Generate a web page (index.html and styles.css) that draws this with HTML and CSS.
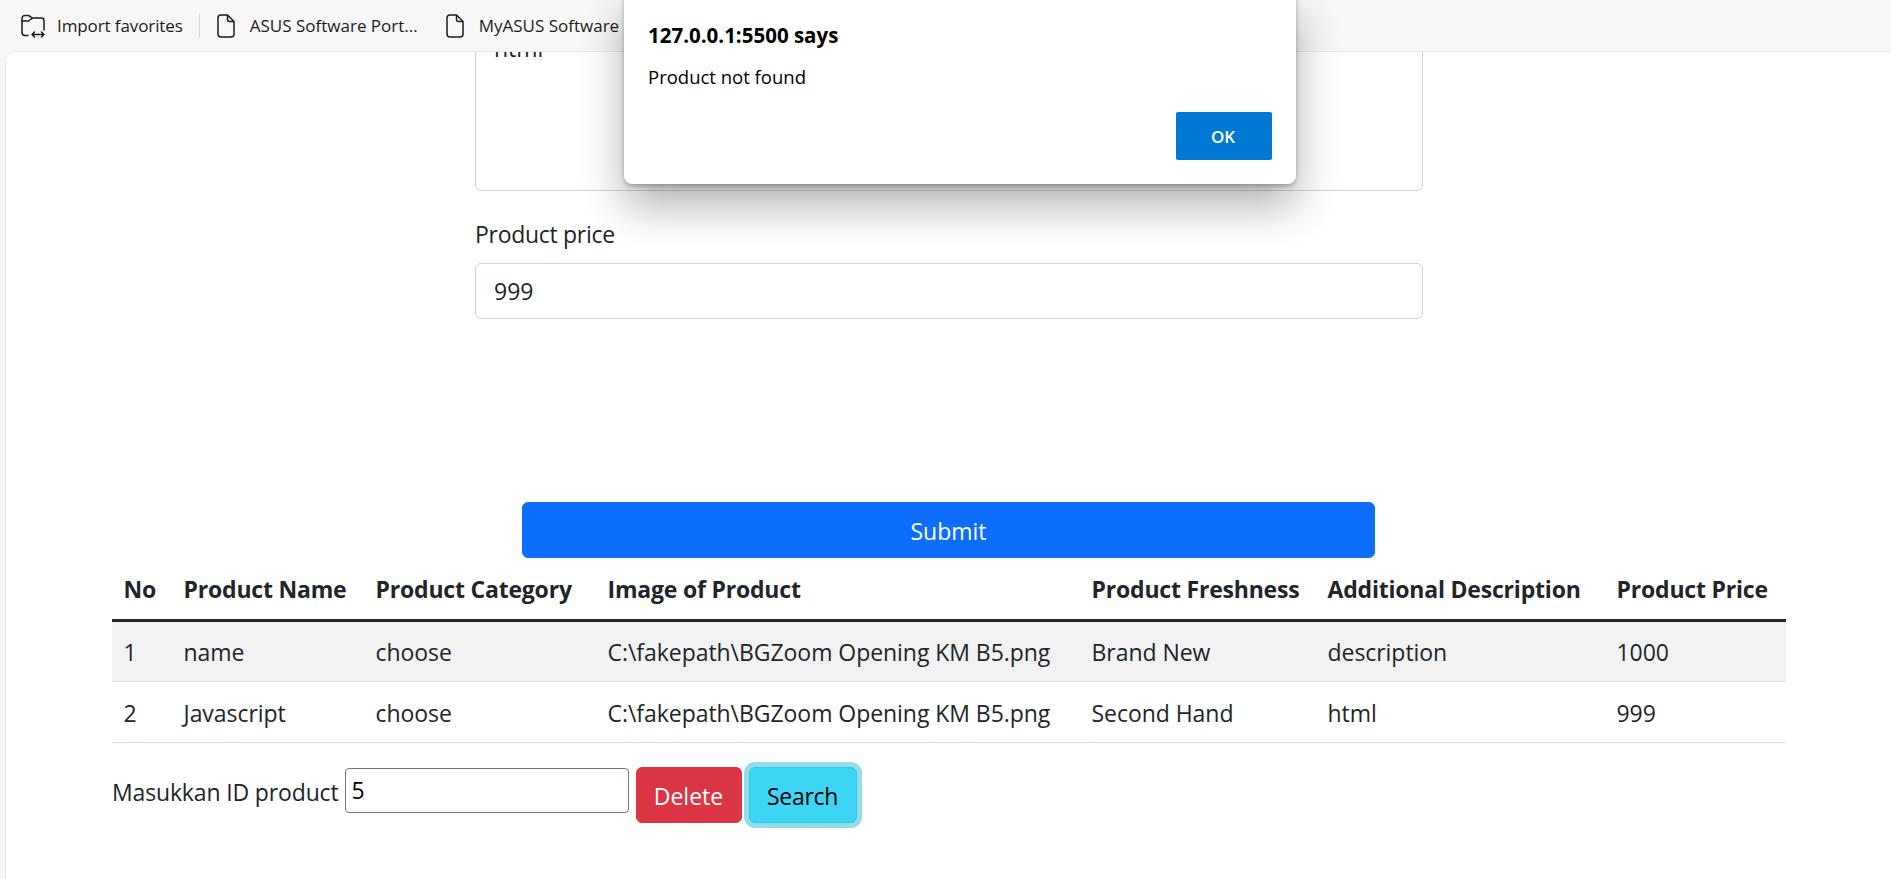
FILE: index.html
```html
<!DOCTYPE html>
<html lang="en">
<head>
<meta charset="utf-8">
<title>Products</title>
<link rel="stylesheet" href="styles.css">
</head>
<body>
<nav class="favbar">
  <a class="fav fav-import">
    <svg class="ico ico-folder" viewBox="0 0 26 24" fill="none" stroke="#1c1c1c" stroke-width="1.5" stroke-linecap="round" stroke-linejoin="round"><path d="M2 18V4.500a3 3 0 0 1 3-3h3c.8 0 1.400.3 2 .8l2 1.700h9.500a2.500 2.500 0 0 1 2.500 2.500V16"/><path d="M2 7h6.500l3.500-2.500"/><path d="M2 18.500a3 3 0 0 0 3 3h3"/><path d="M12 20.500h12M14.500 18L12 20.500 14.500 23M21.500 18L24 20.500 21.500 23"/></svg>
    <span>Import favorites</span>
  </a>
  <span class="fav-sep"></span>
  <a class="fav">
    <svg class="ico ico-file" viewBox="0 0 20 26" fill="none" stroke="#1c1c1c" stroke-width="1.500" stroke-linejoin="round"><path d="M5 2h6.500L18 8.500V21a3 3 0 0 1-3 3H5a3 3 0 0 1-3-3V5a3 3 0 0 1 3-3Z"/><path d="M11.500 2v4.500a2 2 0 0 0 2 2H18"/></svg>
    <span>ASUS Software Port...</span>
  </a>
  <a class="fav">
    <svg class="ico ico-file" viewBox="0 0 20 26" fill="none" stroke="#1c1c1c" stroke-width="1.500" stroke-linejoin="round"><path d="M5 2h6.500L18 8.500V21a3 3 0 0 1-3 3H5a3 3 0 0 1-3-3V5a3 3 0 0 1 3-3Z"/><path d="M11.500 2v4.500a2 2 0 0 0 2 2H18"/></svg>
    <span>MyASUS Software</span>
  </a>
</nav>

<main class="page">
  <form class="product-form">
    <textarea class="control area" readonly>html</textarea>
    <label class="field-label" for="price">Product price</label>
    <input class="control" id="price" type="text" value="999" readonly>
    <button class="btn btn-primary submit" type="button">Submit</button>
  </form>

  <section class="listing">
    <table class="products">
      <thead>
        <tr>
          <th>No</th><th>Product Name</th><th>Product Category</th><th>Image of Product</th><th>Product Freshness</th><th>Additional Description</th><th>Product Price</th>
        </tr>
      </thead>
      <tbody>
        <tr class="striped">
          <td>1</td><td>name</td><td>choose</td><td>C:\fakepath\BGZoom Opening KM B5.png</td><td>Brand New</td><td>description</td><td>1000</td>
        </tr>
        <tr>
          <td>2</td><td>Javascript</td><td>choose</td><td>C:\fakepath\BGZoom Opening KM B5.png</td><td>Second Hand</td><td>html</td><td>999</td>
        </tr>
      </tbody>
    </table>
    <div class="actions">
      <label class="id-label" for="pid">Masukkan ID product</label>
      <input class="id-input" id="pid" type="text" value="5" readonly>
      <button class="btn btn-danger" type="button">Delete</button>
      <button class="btn btn-info" type="button">Search</button>
    </div>
  </section>
</main>

<div class="dialog" role="alertdialog">
  <div class="dialog-title">127.0.0.1:5500 says</div>
  <div class="dialog-msg">Product not found</div>
  <div class="dialog-foot"><button class="dialog-ok" type="button">OK</button></div>
</div>
</body>
</html>
```

FILE: styles.css
```css
* { box-sizing: border-box; }
html, body { margin: 0; height: 100%; }
body {
  background: #f7f7f7;
  color: #212529;
  font-family: "Open Sans", "Noto Sans", sans-serif;
  overflow: hidden;
  display: flex;
  flex-direction: column;
}

.favbar {
  height: 51px;
  flex: none;
  display: flex;
  align-items: center;
  padding-left: 20px;
  font-size: 17px;
  color: #1c1c1c;
}
.fav { display: flex; align-items: center; gap: 14px; margin-right: 27px; white-space: nowrap; }
.fav-import { gap: 11px; margin-right: 16px; letter-spacing: -0.1px; }
.fav-sep { width: 1px; height: 24px; background: #d6d6d6; margin-right: 16px; }
.ico-folder { width: 26px; height: 24px; }
.ico-file { width: 20px; height: 26px; }

.page {
  flex: 1;
  margin-left: 5px;
  background: #fff;
  border-top-left-radius: 10px;
  border-top: 1px solid #e8e8e8;
  border-left: 1px solid #ececec;
  overflow: hidden;
  font-size: 23px;
}

.product-form {
  width: 948px;
  margin: -34px 0 0 469px;
  display: flex;
  flex-direction: column;
}
.control {
  display: block;
  width: 100%;
  height: 56px;
  padding: 8px 18px;
  font: inherit;
  color: #212529;
  background: #fff;
  border: 1px solid #ced4da;
  border-radius: 6px;
  outline: none;
}
.area { height: 173px; padding-top: 13px; resize: none; overflow: hidden; }
.field-label { margin: 27px 0 13px; line-height: 32px; letter-spacing: -0.3px; }

.btn {
  height: 56px;
  border: 1px solid transparent;
  border-radius: 6px;
  font: inherit;
  padding: 2px 0 0;
}
.btn-primary { background: #0d6efd; border-color: #0d6efd; color: #fff; }
.submit { width: 853px; margin: 183px 0 0 47px; }
.btn-danger { width: 106px; background: #dc3545; border-color: #dc3545; color: #fff; }
.btn-info {
  width: 108px;
  background: #3dd5f3;
  border-color: #25cff2;
  color: #000;
  letter-spacing: -0.3px;
  box-shadow: 0 0 0 5px #94dde9;
}

.listing { margin-left: 106px; width: 1674px; }
.products {
  width: 100%;
  table-layout: fixed;
  border-collapse: collapse;
}
.products th, .products td { padding: 2px 0 0 11.500px; text-align: left; }
.products th { height: 62px; font-weight: 700; letter-spacing: -0.2px; border-bottom: 3px solid #212529; }
.products td { height: 61px; letter-spacing: -0.05px; border-bottom: 1px solid #dee2e6; }
.striped td { background: #f2f2f2; }
.products th:nth-child(1) { width: 60px; }
.products th:nth-child(2) { width: 192px; }
.products th:nth-child(3) { width: 232px; }
.products th:nth-child(4) { width: 484px; }
.products th:nth-child(5) { width: 236px; }
.products th:nth-child(6) { width: 289px; }

.actions {
  display: flex;
  align-items: flex-start;
  margin-top: 24px;
  gap: 7px;
}
.id-label { line-height: 50px; margin-right: -1px; letter-spacing: -0.15px; }
.id-input {
  width: 284px;
  height: 45px;
  margin-top: 1px;
  padding: 0 6px;
  font: inherit;
  color: #000;
  background: #fff;
  border: 1px solid #767676;
  border-radius: 4px;
  outline: none;
}

.dialog {
  position: absolute;
  left: 624px;
  top: -10px;
  width: 672px;
  height: 194px;
  background: #fff;
  border-radius: 8px;
  color: #000;
  box-shadow: 0 2px 4px rgba(0,0,0,.28), 0 22px 44px rgba(0,0,0,.3);
  padding: 0 24px;
}
.dialog-title { font-weight: 700; font-size: 20.500px; line-height: 24px; margin-top: 33px; }
.dialog-msg { font-size: 18.500px; line-height: 24px; margin-top: 18px; }
.dialog-foot { display: flex; justify-content: flex-end; margin-top: 23px; }
.dialog-ok {
  width: 96px;
  height: 48px;
  background: #0078d4;
  border: 0;
  border-radius: 2px;
  color: #fff;
  font: 600 17px "Open Sans", sans-serif;
  padding: 0 2px 0 0;
}
```
